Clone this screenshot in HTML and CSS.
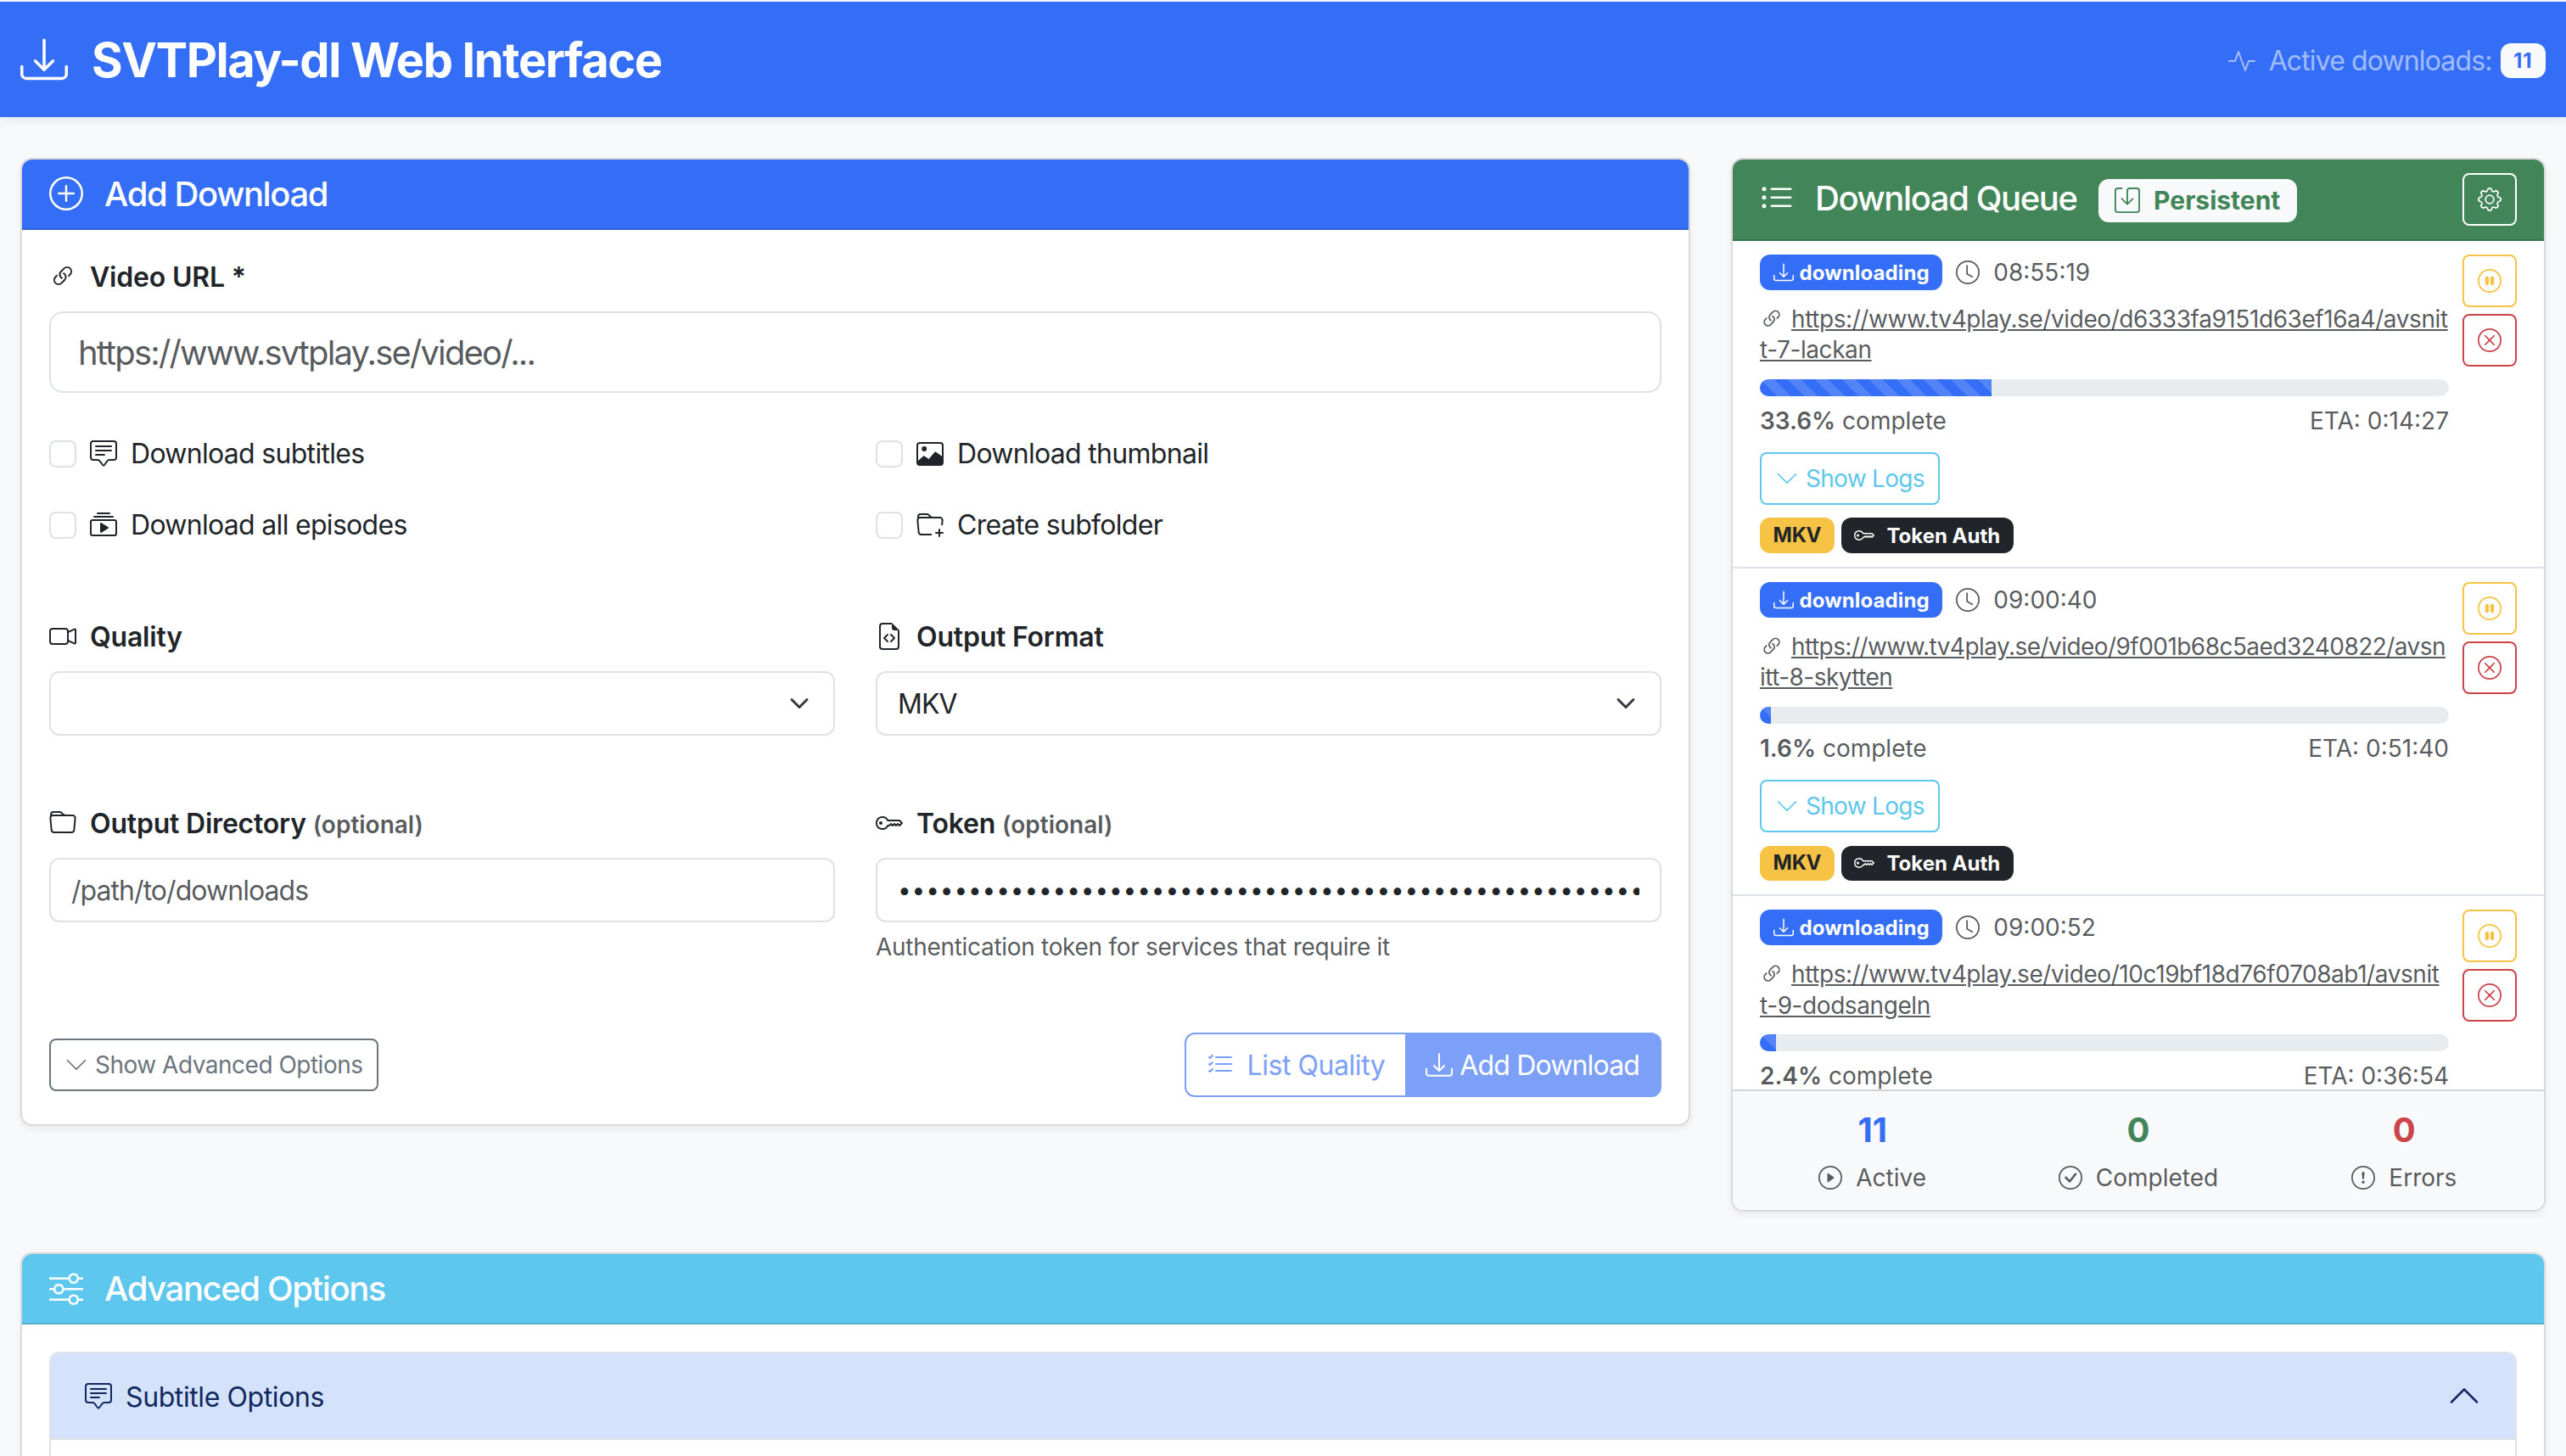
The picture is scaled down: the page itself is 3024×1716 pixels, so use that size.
FILE: index.html
```html
<!DOCTYPE html>
<html lang="en">
<head>
    <meta charset="UTF-8">
    <meta name="viewport" content="width=device-width, initial-scale=1.0">
    <title>SVTPlay-dl Web Interface</title>
    <link rel="stylesheet" href="styles.css">
</head>
<body>
    <!-- icon sprite -->
    <svg class="sprite" xmlns="http://www.w3.org/2000/svg">
        <symbol id="i-download" viewBox="0 0 16 16"><path d="M.5 9.9a.5.5 0 0 1 .5.5v2.5a1 1 0 0 0 1 1h12a1 1 0 0 0 1-1v-2.5a.5.5 0 0 1 1 0v2.5a2 2 0 0 1-2 2H2a2 2 0 0 1-2-2v-2.5a.5.5 0 0 1 .5-.5z"/><path d="M7.646 11.854a.5.5 0 0 0 .708 0l3-3a.5.5 0 0 0-.708-.708L8.5 10.293V1.5a.5.5 0 0 0-1 0v8.793L5.354 8.146a.5.5 0 1 0-.708.708l3 3z"/></symbol>
        <symbol id="i-plus-circle" viewBox="0 0 16 16"><path d="M8 15A7 7 0 1 1 8 1a7 7 0 0 1 0 14zm0 1A8 8 0 1 0 8 0a8 8 0 0 0 0 16z"/><path d="M8 4a.5.5 0 0 1 .5.5v3h3a.5.5 0 0 1 0 1h-3v3a.5.5 0 0 1-1 0v-3h-3a.5.5 0 0 1 0-1h3v-3A.5.5 0 0 1 8 4z"/></symbol>
        <symbol id="i-link" viewBox="0 0 16 16"><path d="M4.715 6.542 3.343 7.914a3 3 0 1 0 4.243 4.243l1.828-1.829A3 3 0 0 0 8.586 5.5L8 6.086a1.002 1.002 0 0 0-.154.199 2 2 0 0 1 .861 3.337L6.88 11.45a2 2 0 1 1-2.83-2.83l.793-.792a4.018 4.018 0 0 1-.128-1.287z"/><path d="M6.586 4.672A3 3 0 0 0 7.414 9.5l.775-.776a2 2 0 0 1-.896-3.346L9.12 3.55a2 2 0 1 1 2.83 2.83l-.793.792c.112.42.155.855.128 1.287l1.372-1.372a3 3 0 1 0-4.243-4.243L6.586 4.672z"/></symbol>
        <symbol id="i-chat" viewBox="0 0 16 16"><path d="M14 1a1 1 0 0 1 1 1v8a1 1 0 0 1-1 1h-2.5a2 2 0 0 0-1.6.8L8 14.333 6.1 11.8a2 2 0 0 0-1.6-.8H2a1 1 0 0 1-1-1V2a1 1 0 0 1 1-1h12zM2 0a2 2 0 0 0-2 2v8a2 2 0 0 0 2 2h2.5a1 1 0 0 1 .8.4l1.9 2.533a1 1 0 0 0 1.6 0l1.9-2.533a1 1 0 0 1 .8-.4H14a2 2 0 0 0 2-2V2a2 2 0 0 0-2-2H2z"/><path d="M3 3.5a.5.5 0 0 1 .5-.5h9a.5.5 0 0 1 0 1h-9a.5.5 0 0 1-.5-.5zM3 6a.5.5 0 0 1 .5-.5h9a.5.5 0 0 1 0 1h-9A.5.5 0 0 1 3 6zm0 2.5a.5.5 0 0 1 .5-.5h5a.5.5 0 0 1 0 1h-5a.5.5 0 0 1-.5-.5z"/></symbol>
        <symbol id="i-collection" viewBox="0 0 16 16"><path d="M2 3a.5.5 0 0 0 .5.5h11a.5.5 0 0 0 0-1h-11A.5.5 0 0 0 2 3zm2-2a.5.5 0 0 0 .5.5h7a.5.5 0 0 0 0-1h-7A.5.5 0 0 0 4 1zm2.765 5.576A.5.5 0 0 0 6 7v5a.5.5 0 0 0 .765.424l4-2.5a.5.5 0 0 0 0-.848l-4-2.5z"/><path d="M1.5 14.5A1.5 1.5 0 0 1 0 13V6a1.5 1.5 0 0 1 1.5-1.5h13A1.5 1.5 0 0 1 16 6v7a1.5 1.5 0 0 1-1.5 1.5h-13zm13-1a.5.5 0 0 0 .5-.5V6a.5.5 0 0 0-.5-.5h-13A.5.5 0 0 0 1 6v7a.5.5 0 0 0 .5.5h13z"/></symbol>
        <symbol id="i-image" viewBox="0 0 16 16"><path fill-rule="evenodd" d="M2 1a2 2 0 0 0-2 2v10a2 2 0 0 0 2 2h12a2 2 0 0 0 2-2V3a2 2 0 0 0-2-2H2zm0 1h12a1 1 0 0 1 1 1v6.4l-3.6-2.6a.5.5 0 0 0-.6.1L7.3 11 4.7 9.2a.5.5 0 0 0-.6.1L1 12V3a1 1 0 0 1 1-1z"/><circle cx="4.6" cy="5" r="1.5"/></symbol>
        <symbol id="i-folder-plus" viewBox="0 0 16 16"><path d="m.5 3 .04.87a1.99 1.99 0 0 0-.342 1.311l.637 7A2 2 0 0 0 2.826 14H9v-1H2.826a1 1 0 0 1-.995-.91l-.637-7A1 1 0 0 1 2.19 4h11.62a1 1 0 0 1 .996 1.09L14.54 8h1.005l.256-2.819A2 2 0 0 0 13.81 3H9.828a2 2 0 0 1-1.414-.586l-.828-.828A2 2 0 0 0 6.172 1H2.5a2 2 0 0 0-2 2zm5.672-1a1 1 0 0 1 .707.293L7.586 3H2.19c-.24 0-.47.042-.683.12L1.5 2.98a1 1 0 0 1 1-.98h3.672z"/><path d="M13.5 10a.5.5 0 0 1 .5.5V12h1.5a.5.5 0 1 1 0 1H14v1.5a.5.5 0 1 1-1 0V13h-1.5a.5.5 0 0 1 0-1H13v-1.5a.5.5 0 0 1 .5-.5z"/></symbol>
        <symbol id="i-camera" viewBox="0 0 16 16"><path fill-rule="evenodd" d="M0 5a2 2 0 0 1 2-2h7.5a2 2 0 0 1 1.983 1.738l3.11-1.382A1 1 0 0 1 16 4.269v7.462a1 1 0 0 1-1.406.913l-3.111-1.382A2 2 0 0 1 9.5 13H2a2 2 0 0 1-2-2V5zm11.5 5.175 3.5 1.556V4.269l-3.5 1.556v4.35zM2 4a1 1 0 0 0-1 1v6a1 1 0 0 0 1 1h7.5a1 1 0 0 0 1-1V5a1 1 0 0 0-1-1H2z"/></symbol>
        <symbol id="i-file-code" viewBox="0 0 16 16"><path d="M14 4.5V14a2 2 0 0 1-2 2H4a2 2 0 0 1-2-2V2a2 2 0 0 1 2-2h5.5L14 4.5zm-3 0A1.5 1.5 0 0 1 9.5 3V1H4a1 1 0 0 0-1 1v12a1 1 0 0 0 1 1h8a1 1 0 0 0 1-1V4.5h-2z"/><path d="M8.646 6.646a.5.5 0 0 1 .708 0l2 2a.5.5 0 0 1 0 .708l-2 2a.5.5 0 0 1-.708-.708L10.293 9 8.646 7.354a.5.5 0 0 1 0-.708zm-1.292 0a.5.5 0 0 0-.708 0l-2 2a.5.5 0 0 0 0 .708l2 2a.5.5 0 0 0 .708-.708L5.707 9l1.647-1.646a.5.5 0 0 0 0-.708z"/></symbol>
        <symbol id="i-folder" viewBox="0 0 16 16"><path d="M.54 3.87.5 3a2 2 0 0 1 2-2h3.672a2 2 0 0 1 1.414.586l.828.828A2 2 0 0 0 9.828 3h3.982a2 2 0 0 1 1.992 2.181l-.637 7A2 2 0 0 1 13.174 14H2.826a2 2 0 0 1-1.991-1.819l-.637-7a1.99 1.99 0 0 1 .342-1.31zM2.19 4a1 1 0 0 0-.996 1.09l.637 7a1 1 0 0 0 .995.91h10.348a1 1 0 0 0 .995-.91l.637-7A1 1 0 0 0 13.81 4H2.19zm4.69-1.707A1 1 0 0 0 6.172 2H2.5a1 1 0 0 0-1 .981l.006.139C1.72 3.042 1.95 3 2.19 3h5.396l-.707-.707z"/></symbol>
        <symbol id="i-key" viewBox="0 0 16 16"><path d="M0 8a4 4 0 0 1 7.465-2H14a.5.5 0 0 1 .354.146l1.5 1.5a.5.5 0 0 1 0 .708l-1.5 1.5a.5.5 0 0 1-.708 0L13 9.207l-.646.647a.5.5 0 0 1-.708 0L11 9.207l-.646.647a.5.5 0 0 1-.708 0L9 9.207l-.646.647A.5.5 0 0 1 8 10h-.535A4 4 0 0 1 0 8zm4-3a3 3 0 1 0 2.712 4.285A.5.5 0 0 1 7.163 9h.63l.853-.854a.5.5 0 0 1 .708 0l.646.647.646-.647a.5.5 0 0 1 .708 0l.646.647.646-.647a.5.5 0 0 1 .708 0l.646.647.793-.793-1-1h-6.63a.5.5 0 0 1-.451-.285A3 3 0 0 0 4 5z"/><path d="M4 8a1 1 0 1 1-2 0 1 1 0 0 1 2 0z"/></symbol>
        <symbol id="i-sliders" viewBox="0 0 16 16"><path fill-rule="evenodd" d="M11.5 2a1.5 1.5 0 1 0 0 3 1.5 1.5 0 0 0 0-3zM9.05 3a2.5 2.5 0 0 1 4.9 0H16v1h-2.05a2.5 2.5 0 0 1-4.9 0H0V3h9.05zM4.5 7a1.5 1.5 0 1 0 0 3 1.5 1.5 0 0 0 0-3zM2.05 8a2.5 2.5 0 0 1 4.9 0H16v1H6.95a2.5 2.5 0 0 1-4.9 0H0V8h2.05zm9.45 4a1.5 1.5 0 1 0 0 3 1.5 1.5 0 0 0 0-3zm-2.45 1a2.5 2.5 0 0 1 4.9 0H16v1h-2.05a2.5 2.5 0 0 1-4.9 0H0v-1h9.05z"/></symbol>
        <symbol id="i-activity" viewBox="0 0 16 16"><path fill-rule="evenodd" d="M6 2a.5.5 0 0 1 .47.33L10 12.036l1.53-4.208A.5.5 0 0 1 12 7.5h3.5a.5.5 0 0 1 0 1h-3.15l-1.88 5.17a.5.5 0 0 1-.94 0L6 3.964 4.47 8.171A.5.5 0 0 1 4 8.5H.5a.5.5 0 0 1 0-1h3.15l1.88-5.17A.5.5 0 0 1 6 2Z"/></symbol>
        <symbol id="i-list" viewBox="0 0 16 16"><path fill-rule="evenodd" d="M5 11.5a.5.5 0 0 1 .5-.5h9a.5.5 0 0 1 0 1h-9a.5.5 0 0 1-.5-.5zm0-4a.5.5 0 0 1 .5-.5h9a.5.5 0 0 1 0 1h-9a.5.5 0 0 1-.5-.5zm0-4a.5.5 0 0 1 .5-.5h9a.5.5 0 0 1 0 1h-9a.5.5 0 0 1-.5-.5zm-3 1a1 1 0 1 0 0-2 1 1 0 0 0 0 2zm0 4a1 1 0 1 0 0-2 1 1 0 0 0 0 2zm0 4a1 1 0 1 0 0-2 1 1 0 0 0 0 2z"/></symbol>
        <symbol id="i-list-check" viewBox="0 0 16 16"><path fill-rule="evenodd" d="M5 11.5a.5.5 0 0 1 .5-.5h9a.5.5 0 0 1 0 1h-9a.5.5 0 0 1-.5-.5zm0-4a.5.5 0 0 1 .5-.5h9a.5.5 0 0 1 0 1h-9a.5.5 0 0 1-.5-.5zm0-4a.5.5 0 0 1 .5-.5h9a.5.5 0 0 1 0 1h-9a.5.5 0 0 1-.5-.5zM3.854 2.146a.5.5 0 0 1 0 .708l-1.5 1.5a.5.5 0 0 1-.708 0l-.5-.5a.5.5 0 1 1 .708-.708L2 3.293l1.146-1.147a.5.5 0 0 1 .708 0zm0 4a.5.5 0 0 1 0 .708l-1.5 1.5a.5.5 0 0 1-.708 0l-.5-.5a.5.5 0 1 1 .708-.708L2 7.293l1.146-1.147a.5.5 0 0 1 .708 0zm0 4a.5.5 0 0 1 0 .708l-1.5 1.5a.5.5 0 0 1-.708 0l-.5-.5a.5.5 0 0 1 .708-.708l.146.147 1.146-1.147a.5.5 0 0 1 .708 0z"/></symbol>
        <symbol id="i-save" viewBox="0 0 16 16"><path d="M2 1a1 1 0 0 0-1 1v12a1 1 0 0 0 1 1h12a1 1 0 0 0 1-1V2a1 1 0 0 0-1-1H9.5a1 1 0 0 0-1 1v7.293l2.646-2.647a.5.5 0 0 1 .708.708l-3.5 3.5a.5.5 0 0 1-.708 0l-3.5-3.5a.5.5 0 1 1 .708-.708L7.5 9.293V2a2 2 0 0 1 2-2H14a2 2 0 0 1 2 2v12a2 2 0 0 1-2 2H2a2 2 0 0 1-2-2V2a2 2 0 0 1 2-2h2.5a.5.5 0 0 1 0 1H2z"/></symbol>
        <symbol id="i-gear" viewBox="0 0 16 16"><path d="M8 4.754a3.246 3.246 0 1 0 0 6.492 3.246 3.246 0 0 0 0-6.492zM5.754 8a2.246 2.246 0 1 1 4.492 0 2.246 2.246 0 0 1-4.492 0z"/><path d="M9.796 1.343c-.527-1.79-3.065-1.79-3.592 0l-.094.319a.873.873 0 0 1-1.255.52l-.292-.16c-1.64-.892-3.433.902-2.54 2.541l.159.292a.873.873 0 0 1-.52 1.255l-.319.094c-1.79.527-1.79 3.065 0 3.592l.319.094a.873.873 0 0 1 .52 1.255l-.16.292c-.892 1.64.901 3.434 2.541 2.54l.292-.159a.873.873 0 0 1 1.255.52l.094.319c.527 1.79 3.065 1.79 3.592 0l.094-.319a.873.873 0 0 1 1.255-.52l.292.16c1.64.893 3.434-.902 2.54-2.541l-.159-.292a.873.873 0 0 1 .52-1.255l.319-.094c1.79-.527 1.79-3.065 0-3.592l-.319-.094a.873.873 0 0 1-.52-1.255l.16-.292c.893-1.64-.902-3.433-2.541-2.54l-.292.159a.873.873 0 0 1-1.255-.52l-.094-.319zm-2.633.283c.246-.835 1.428-.835 1.674 0l.094.319a1.873 1.873 0 0 0 2.693 1.115l.291-.16c.764-.415 1.6.42 1.184 1.185l-.159.292a1.873 1.873 0 0 0 1.116 2.692l.318.094c.835.246.835 1.428 0 1.674l-.319.094a1.873 1.873 0 0 0-1.115 2.693l.16.291c.415.764-.42 1.6-1.185 1.184l-.291-.159a1.873 1.873 0 0 0-2.693 1.116l-.094.318c-.246.835-1.428.835-1.674 0l-.094-.319a1.873 1.873 0 0 0-2.692-1.115l-.292.16c-.764.415-1.6-.42-1.184-1.185l.159-.291A1.873 1.873 0 0 0 1.945 8.93l-.319-.094c-.835-.246-.835-1.428 0-1.674l.319-.094A1.873 1.873 0 0 0 3.06 4.377l-.16-.292c-.415-.764.42-1.6 1.185-1.184l.292.159a1.873 1.873 0 0 0 2.692-1.115l.094-.319z"/></symbol>
        <symbol id="i-clock" viewBox="0 0 16 16"><path d="M8 3.5a.5.5 0 0 0-1 0V9a.5.5 0 0 0 .252.434l3.5 2a.5.5 0 0 0 .496-.868L8 8.71V3.5z"/><path d="M8 16A8 8 0 1 0 8 0a8 8 0 0 0 0 16zm7-8A7 7 0 1 1 1 8a7 7 0 0 1 14 0z"/></symbol>
        <symbol id="i-pause" viewBox="0 0 16 16"><path d="M8 15A7 7 0 1 1 8 1a7 7 0 0 1 0 14zm0 1A8 8 0 1 0 8 0a8 8 0 0 0 0 16z"/><path d="M5 6.25a1.25 1.25 0 1 1 2.5 0v3.5a1.25 1.25 0 1 1-2.5 0v-3.5zm3.5 0a1.25 1.25 0 1 1 2.5 0v3.5a1.25 1.25 0 1 1-2.5 0v-3.5z"/></symbol>
        <symbol id="i-x" viewBox="0 0 16 16"><path d="M8 15A7 7 0 1 1 8 1a7 7 0 0 1 0 14zm0 1A8 8 0 1 0 8 0a8 8 0 0 0 0 16z"/><path d="M4.646 4.646a.5.5 0 0 1 .708 0L8 7.293l2.646-2.647a.5.5 0 0 1 .708.708L8.707 8l2.647 2.646a.5.5 0 0 1-.708.708L8 8.707l-2.646 2.647a.5.5 0 0 1-.708-.708L7.293 8 4.646 5.354a.5.5 0 0 1 0-.708z"/></symbol>
        <symbol id="i-down" viewBox="0 0 16 16"><path fill-rule="evenodd" d="M1.646 4.646a.5.5 0 0 1 .708 0L8 10.293l5.646-5.647a.5.5 0 0 1 .708.708l-6 6a.5.5 0 0 1-.708 0l-6-6a.5.5 0 0 1 0-.708z"/></symbol>
        <symbol id="i-up" viewBox="0 0 16 16"><path fill-rule="evenodd" d="M7.646 4.646a.5.5 0 0 1 .708 0l6 6a.5.5 0 0 1-.708.708L8 5.707l-5.646 5.647a.5.5 0 0 1-.708-.708l6-6z"/></symbol>
        <symbol id="i-play" viewBox="0 0 16 16"><path d="M8 15A7 7 0 1 1 8 1a7 7 0 0 1 0 14zm0 1A8 8 0 1 0 8 0a8 8 0 0 0 0 16z"/><path d="M6.271 5.055a.5.5 0 0 1 .52.038l3.5 2.5a.5.5 0 0 1 0 .814l-3.5 2.5A.5.5 0 0 1 6 10.5v-5a.5.5 0 0 1 .271-.445z"/></symbol>
        <symbol id="i-check" viewBox="0 0 16 16"><path d="M8 15A7 7 0 1 1 8 1a7 7 0 0 1 0 14zm0 1A8 8 0 1 0 8 0a8 8 0 0 0 0 16z"/><path d="M10.97 4.97a.235.235 0 0 0-.02.022L7.477 9.417 5.384 7.323a.75.75 0 0 0-1.06 1.06L6.97 11.03a.75.75 0 0 0 1.079-.02l3.992-4.99a.75.75 0 0 0-1.071-1.05z"/></symbol>
        <symbol id="i-alert" viewBox="0 0 16 16"><path d="M8 15A7 7 0 1 1 8 1a7 7 0 0 1 0 14zm0 1A8 8 0 1 0 8 0a8 8 0 0 0 0 16z"/><path d="M7.002 11a1 1 0 1 1 2 0 1 1 0 0 1-2 0zM7.1 4.995a.905.905 0 1 1 1.8 0l-.35 3.507a.552.552 0 0 1-1.1 0L7.1 4.995z"/></symbol>
    </svg>

    <nav class="navbar">
        <div class="brand"><svg class="bi brand-icon"><use href="#i-download"/></svg>SVTPlay-dl Web Interface</div>
        <div class="nav-status">
            <svg class="bi"><use href="#i-activity"/></svg>
            <span>Active downloads:</span>
            <span class="badge badge-light">11</span>
        </div>
    </nav>

    <main class="page">
        <div class="top-row">
            <!-- add download form -->
            <section class="card">
                <h5 class="card-header header-primary"><svg class="bi"><use href="#i-plus-circle"/></svg>Add Download</h5>
                <form class="card-body">
                    <label class="form-label"><svg class="bi"><use href="#i-link"/></svg>Video URL *</label>
                    <input class="form-control control-lg" type="text" placeholder="https://www.svtplay.se/video/...">

                    <div class="checks">
                        <label class="check"><input type="checkbox"><svg class="bi"><use href="#i-chat"/></svg>Download subtitles</label>
                        <label class="check"><input type="checkbox"><svg class="bi"><use href="#i-image"/></svg>Download thumbnail</label>
                        <label class="check"><input type="checkbox"><svg class="bi"><use href="#i-collection"/></svg>Download all episodes</label>
                        <label class="check"><input type="checkbox"><svg class="bi"><use href="#i-folder-plus"/></svg>Create subfolder</label>
                    </div>

                    <div class="form-row">
                        <div>
                            <label class="form-label"><svg class="bi"><use href="#i-camera"/></svg>Quality</label>
                            <select class="form-control form-select"><option></option></select>
                        </div>
                        <div>
                            <label class="form-label"><svg class="bi"><use href="#i-file-code"/></svg>Output Format</label>
                            <select class="form-control form-select"><option>MKV</option></select>
                        </div>
                    </div>

                    <div class="form-row">
                        <div>
                            <label class="form-label"><svg class="bi"><use href="#i-folder"/></svg>Output Directory <small>(optional)</small></label>
                            <input class="form-control" type="text" placeholder="/path/to/downloads">
                        </div>
                        <div>
                            <label class="form-label"><svg class="bi"><use href="#i-key"/></svg>Token <small>(optional)</small></label>
                            <input class="form-control token-input" type="password" value="abcdefghijklmnopqrstuvwxyzabcdefghijklmnopqrstuvwxyzabcdefghijklmnopqrstuvwxyzabcdefghijklmnopqrstuvwxyz">
                            <div class="form-text">Authentication token for services that require it</div>
                        </div>
                    </div>

                    <div class="form-actions">
                        <button type="button" class="btn-sm btn-secondary"><svg class="bi"><use href="#i-down"/></svg>Show Advanced Options</button>
                        <div class="btn-group">
                            <button type="button" class="btn-list"><svg class="bi"><use href="#i-list-check"/></svg>List Quality</button>
                            <button type="button" class="btn-add"><svg class="bi"><use href="#i-download"/></svg>Add Download</button>
                        </div>
                    </div>
                </form>
            </section>

            <!-- queue -->
            <section class="card">
                <div class="card-header header-success queue-header">
                    <svg class="bi"><use href="#i-list"/></svg><span class="queue-title">Download Queue</span>
                    <span class="badge badge-persistent"><svg class="bi"><use href="#i-save"/></svg>Persistent</span>
                    <button type="button" class="btn-icon btn-white"><svg class="bi"><use href="#i-gear"/></svg></button>
                </div>
                <div class="queue-list">
                    <div class="queue-item">
                        <div class="item-main">
                            <div class="item-meta">
                                <span class="badge badge-primary"><svg class="bi"><use href="#i-download"/></svg>downloading</span>
                                <span class="muted"><svg class="bi"><use href="#i-clock"/></svg>08:55:19</span>
                            </div>
                            <div class="item-url"><svg class="bi"><use href="#i-link"/></svg><a href="#">https://www.tv4play.se/video/d6333fa9151d63ef16a4/avsnit<br>t-7-lackan</a></div>
                            <div class="progress"><div class="progress-bar" style="width: 33.6%"></div></div>
                            <div class="item-progress"><span><b>33.6%</b> complete</span><span>ETA: 0:14:27</span></div>
                            <button type="button" class="btn-sm btn-info"><svg class="bi"><use href="#i-down"/></svg>Show Logs</button>
                            <div class="item-tags">
                                <span class="badge badge-warning">MKV</span>
                                <span class="badge badge-dark"><svg class="bi"><use href="#i-key"/></svg>Token Auth</span>
                            </div>
                        </div>
                        <div class="item-actions">
                            <button type="button" class="btn-icon btn-warning"><svg class="bi"><use href="#i-pause"/></svg></button>
                            <button type="button" class="btn-icon btn-danger"><svg class="bi"><use href="#i-x"/></svg></button>
                        </div>
                    </div>

                    <div class="queue-item">
                        <div class="item-main">
                            <div class="item-meta">
                                <span class="badge badge-primary"><svg class="bi"><use href="#i-download"/></svg>downloading</span>
                                <span class="muted"><svg class="bi"><use href="#i-clock"/></svg>09:00:40</span>
                            </div>
                            <div class="item-url url-tight"><svg class="bi"><use href="#i-link"/></svg><a href="#">https://www.tv4play.se/video/9f001b68c5aed3240822/avsn<br>itt-8-skytten</a></div>
                            <div class="progress"><div class="progress-bar" style="width: 1.6%"></div></div>
                            <div class="item-progress"><span><b>1.6%</b> complete</span><span>ETA: 0:51:40</span></div>
                            <button type="button" class="btn-sm btn-info"><svg class="bi"><use href="#i-down"/></svg>Show Logs</button>
                            <div class="item-tags">
                                <span class="badge badge-warning">MKV</span>
                                <span class="badge badge-dark"><svg class="bi"><use href="#i-key"/></svg>Token Auth</span>
                            </div>
                        </div>
                        <div class="item-actions">
                            <button type="button" class="btn-icon btn-warning"><svg class="bi"><use href="#i-pause"/></svg></button>
                            <button type="button" class="btn-icon btn-danger"><svg class="bi"><use href="#i-x"/></svg></button>
                        </div>
                    </div>

                    <div class="queue-item">
                        <div class="item-main">
                            <div class="item-meta">
                                <span class="badge badge-primary"><svg class="bi"><use href="#i-download"/></svg>downloading</span>
                                <span class="muted"><svg class="bi"><use href="#i-clock"/></svg>09:00:52</span>
                            </div>
                            <div class="item-url"><svg class="bi"><use href="#i-link"/></svg><a href="#">https://www.tv4play.se/video/10c19bf18d76f0708ab1/avsnit<br>t-9-dodsangeln</a></div>
                            <div class="progress"><div class="progress-bar" style="width: 2.4%"></div></div>
                            <div class="item-progress"><span><b>2.4%</b> complete</span><span>ETA: 0:36:54</span></div>
                        </div>
                        <div class="item-actions">
                            <button type="button" class="btn-icon btn-warning"><svg class="bi"><use href="#i-pause"/></svg></button>
                            <button type="button" class="btn-icon btn-danger"><svg class="bi"><use href="#i-x"/></svg></button>
                        </div>
                    </div>
                </div>
                <div class="queue-stats">
                    <div class="stat">
                        <div class="stat-num text-primary">11</div>
                        <div class="muted"><svg class="bi"><use href="#i-play"/></svg>Active</div>
                    </div>
                    <div class="stat">
                        <div class="stat-num text-success">0</div>
                        <div class="muted"><svg class="bi"><use href="#i-check"/></svg>Completed</div>
                    </div>
                    <div class="stat">
                        <div class="stat-num text-danger">0</div>
                        <div class="muted"><svg class="bi"><use href="#i-alert"/></svg>Errors</div>
                    </div>
                </div>
            </section>
        </div>

        <section class="card advanced">
            <h5 class="card-header header-info"><svg class="bi"><use href="#i-sliders"/></svg>Advanced Options</h5>
            <div class="card-body">
                <div class="accordion-item">
                    <div class="accordion-button">
                        <span><svg class="bi"><use href="#i-chat"/></svg>Subtitle Options</span>
                        <svg class="bi accordion-icon"><use href="#i-up"/></svg>
                    </div>
                    <div class="accordion-body"></div>
                </div>
            </div>
        </section>
    </main>
</body>
</html>
```

FILE: styles.css
```css
html, body {
    height: 100%;
    overflow: hidden;
}
body {
    margin: 0;
    padding-top: 2px;
    box-sizing: border-box;
    background-color: #f8f9fa;
    color: #212529;
    font-family: Inter, "Liberation Sans", sans-serif;
    font-size: 32px;
    line-height: 1.5;
    letter-spacing: -.7px;
}
* {
    box-sizing: border-box;
}
.sprite {
    display: none;
}
.bi {
    display: inline-block;
    width: 1em;
    height: 1em;
    fill: currentColor;
    vertical-align: -.125em;
    flex-shrink: 0;
}
.muted {
    color: rgba(33, 37, 41, .75);
    font-size: 28px;
    letter-spacing: 0;
}
.muted .bi {
    margin-right: 16px;
}
.text-primary { color: #356ef6; }
.text-success { color: #428559; }
.text-danger { color: #cb444a; }

/* navbar */
.navbar {
    display: flex;
    align-items: center;
    justify-content: space-between;
    height: 136px;
    padding: 2px 24px 0;
    background-color: #356ef6;
    box-shadow: 0 4px 12px rgba(0, 0, 0, .08);
    color: #fff;
}
.brand {
    font-size: 56px;
    font-weight: 700;
    letter-spacing: -1.4px;
}
.brand-icon {
    margin-right: 28px;
}
.nav-status {
    display: flex;
    align-items: center;
    padding-top: 1px;
    color: rgba(255, 255, 255, .55);
    letter-spacing: -.88px;
}
.nav-status .bi {
    margin-right: 16px;
}
.nav-status .badge {
    margin-left: 10px;
}

/* badges */
.badge {
    display: inline-block;
    padding: .35em .65em;
    border-radius: 12px;
    font-size: 24px;
    font-weight: 700;
    line-height: 1;
    letter-spacing: 0;
    white-space: nowrap;
}
.badge-light {
    background: #f8f9fa;
    color: #356ef6;
    letter-spacing: .8px;
}
.badge-primary {
    background: #356ef6;
    color: #fff;
    letter-spacing: .1px;
}
.badge-primary .bi {
    margin-right: 7px;
}
.badge-warning {
    background: #f6c344;
    color: #212529;
    letter-spacing: -.3px;
}
.badge-dark {
    background: #212529;
    color: #fff;
}
.badge-dark .bi {
    margin-right: 14px;
}
.badge-persistent {
    margin: 3px 0 0 25px;
    background: #f8f9fa;
    color: #428559;
    font-size: 30px;
}
.badge-persistent .bi {
    margin-right: 16px;
}

/* layout */
.page {
    padding: 48px 24px 0;
}
.top-row {
    display: grid;
    grid-template-columns: minmax(0, 1968fr) minmax(0, 960fr);
    gap: 48px;
    align-items: start;
}
.card {
    border: 2px solid rgba(0, 0, 0, .15);
    border-radius: 14px;
    background: #fff;
    box-shadow: 0 4px 8px rgba(0, 0, 0, .06);
    overflow: hidden;
}
.card-header {
    margin: 0;
    padding: 20px 32px;
    border-bottom: 2px solid rgba(0, 0, 0, .125);
    color: #fff;
    font-size: 40px;
    font-weight: 500;
    line-height: 40px;
    letter-spacing: -1.4px;
}
.card-header > .bi {
    margin-right: 25px;
}
.header-primary { background: #356ef6; }
.header-success { background: #428559; }
.header-info { background: #5dc7ed; }
.card-body {
    display: block;
    padding: 32px;
}

/* form */
.form-label {
    display: block;
    margin-bottom: 16px;
    font-weight: 600;
    letter-spacing: -.2px;
}
.form-label .bi {
    margin-right: 16px;
}
.form-label small {
    color: rgba(33, 37, 41, .75);
    font-size: 28px;
    letter-spacing: 0;
}
.form-control {
    display: block;
    width: 100%;
    height: 76px;
    padding: 0 24px;
    border: 2px solid #dee2e6;
    border-radius: 12px;
    background: #fff;
    color: #212529;
    font-family: inherit;
    font-size: 32px;
    letter-spacing: -.95px;
    outline: none;
}
.form-control::placeholder {
    color: rgba(33, 37, 41, .75);
    opacity: 1;
}
.control-lg {
    height: 96px;
    padding: 0 32px;
    border-radius: 16px;
    font-size: 40px;
    letter-spacing: -1.85px;
}
.token-input {
    font-size: 28px;
    letter-spacing: .85px;
}
.form-select {
    appearance: none;
    padding-right: 72px;
    background-image: url("data:image/svg+xml,%3csvg xmlns='http://www.w3.org/2000/svg' viewBox='0 0 16 16'%3e%3cpath fill='none' stroke='%23343a40' stroke-linecap='round' stroke-linejoin='round' stroke-width='2' d='m2 5 6 6 6-6'/%3e%3c/svg%3e");
    background-repeat: no-repeat;
    background-position: right 24px center;
    background-size: 32px 24px;
}
.form-text {
    margin-top: 8px;
    color: rgba(33, 37, 41, .75);
    font-size: 28px;
    letter-spacing: -.3px;
}
.checks {
    display: grid;
    grid-template-columns: 1fr 1fr;
    gap: 36px 48px;
    margin: 48px 0 84px;
}
.check {
    display: flex;
    align-items: center;
}
.check input {
    appearance: none;
    width: 32px;
    height: 32px;
    margin: 0 16px 0 0;
    border: 2px solid #dee2e6;
    border-radius: 8px;
    background: #fff;
}
.check .bi {
    margin-right: 16px;
}
.form-row {
    display: grid;
    grid-template-columns: 1fr 1fr;
    gap: 48px;
    margin-bottom: 80px;
}
.form-actions {
    display: flex;
    align-items: center;
    justify-content: space-between;
}

/* buttons */
button {
    font-family: inherit;
    letter-spacing: inherit;
    cursor: pointer;
}
.btn-sm {
    display: inline-block;
    height: 62px;
    padding: 0 16px;
    border: 2px solid;
    border-radius: 8px;
    background: #fff;
    font-size: 28px;
}
.btn-sm .bi {
    margin-right: 8px;
}
.btn-secondary {
    border-color: #6c757d;
    color: #6c757d;
    letter-spacing: -.5px;
}
.btn-info {
    border-color: #5dc7ed;
    color: #5dc7ed;
    letter-spacing: -.7px;
}
.btn-group {
    display: flex;
    height: 76px;
}
.btn-group button {
    padding: 0 24px;
    border: 2px solid #7ca0f8;
    font-size: 32px;
}
.btn-list {
    border-radius: 12px 0 0 12px;
    border-right-color: #356ef6 !important;
    background: #fff;
    color: #7ca0f8;
    letter-spacing: -.45px;
}
.btn-list .bi {
    margin-right: 16px;
}
.btn-add {
    margin-left: -2px;
    border-radius: 0 12px 12px 0;
    border-left: 0 !important;
    background: #7ca0f8;
    color: #fff;
    letter-spacing: -.85px;
}
.btn-add .bi {
    margin-right: 8px;
}
.btn-icon {
    width: 64px;
    height: 62px;
    padding: 0;
    border: 2px solid;
    border-radius: 8px;
    background: transparent;
    font-size: 28px;
    line-height: 1;
}
.btn-white {
    border-color: #fff;
    color: #fff;
}
.btn-warning {
    border-color: #f6c344;
    color: #f6c344;
}
.btn-danger {
    border-color: #cb444a;
    color: #cb444a;
}

/* queue */
.queue-header {
    display: flex;
    align-items: center;
    height: 96px;
    padding: 16px 32px;
}
.queue-header > .bi {
    margin-top: -3px;
}
.queue-title {
    margin-top: -3px;
}
.queue-header .btn-icon {
    margin-left: auto;
}
.queue-list {
    height: 1000px;
    overflow: hidden;
}
.queue-item {
    display: flex;
    gap: 16px;
    padding: 16px 32px;
    border-bottom: 2px solid #dee2e6;
}
.item-main {
    flex: 1;
    min-width: 0;
}
.item-actions {
    display: flex;
    flex-direction: column;
    gap: 8px;
}
.item-meta {
    display: flex;
    align-items: center;
    gap: 16px;
    height: 42px;
    margin-bottom: 16px;
}
.item-url {
    margin-bottom: 16.6px;
    color: rgba(33, 37, 41, .75);
    font-size: 28px;
    line-height: 36.2px;
    letter-spacing: -.42px;
    word-break: break-all;
}
.url-tight {
    letter-spacing: -.55px;
}
.item-url .bi {
    margin-right: 9px;
}
.item-url a {
    color: inherit;
}
.progress {
    height: 20px;
    border-radius: 10px;
    background: #e9ecef;
    overflow: hidden;
}
.progress-bar {
    height: 100%;
    background-color: #356ef6;
    background-image: linear-gradient(45deg, rgba(255, 255, 255, .15) 25%, transparent 25%, transparent 50%, rgba(255, 255, 255, .15) 50%, rgba(255, 255, 255, .15) 75%, transparent 75%, transparent);
    background-size: 32px 32px;
}
.item-progress {
    display: flex;
    justify-content: space-between;
    margin: 8px 0 16px;
    color: rgba(33, 37, 41, .75);
    font-size: 28px;
    letter-spacing: 0;
}
.item-progress b {
    font-weight: 600;
}
.item-tags {
    display: flex;
    gap: 8px;
    margin-top: 15.4px;
}
.queue-stats {
    display: grid;
    grid-template-columns: repeat(3, 1fr);
    padding: 16px 8px 17px;
    border-top: 2px solid rgba(0, 0, 0, .15);
    background: #f8f9fa;
    text-align: center;
}
.stat-num {
    margin-bottom: 5px;
    font-size: 40px;
    font-weight: 700;
    letter-spacing: 0;
}

/* advanced options */
.advanced {
    margin-top: 48px;
}
.accordion-item {
    border: 2px solid #dee2e6;
    border-radius: 12px;
    overflow: hidden;
}
.accordion-button {
    display: flex;
    align-items: center;
    justify-content: space-between;
    height: 102px;
    padding: 3px 40px 0;
    border-bottom: 2px solid #dee2e6;
    background: #d4e2fb;
    color: #10275f;
    letter-spacing: -.4px;
}
.accordion-button span .bi {
    margin-right: 16px;
}
.accordion-icon {
    font-size: 40px;
    margin-top: -3px;
}
.accordion-body {
    height: 200px;
}
```
